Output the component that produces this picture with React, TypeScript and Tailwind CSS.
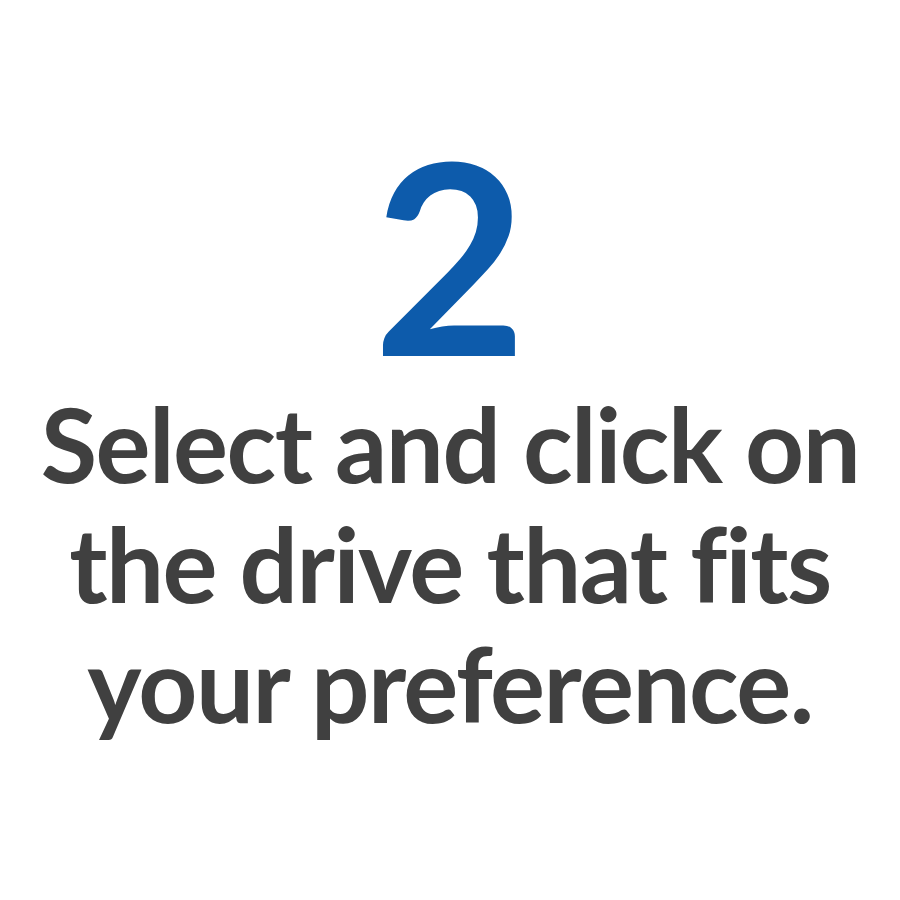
export default function App() {
  return (
    <div className="w-[900px] h-[900px] bg-white flex flex-col items-center pt-[123px] font-['Lato','Liberation_Sans',sans-serif] font-bold">
      <div className="text-[266px] leading-[260px] text-[#0d5bab]">2</div>
      <div className="text-[103px] leading-[120px] tracking-[-1.5px] text-[#404040] text-center">
        <div>Select and click on</div>
        <div>the drive that fits</div>
        <div>your preference.</div>
      </div>
    </div>
  );
}
